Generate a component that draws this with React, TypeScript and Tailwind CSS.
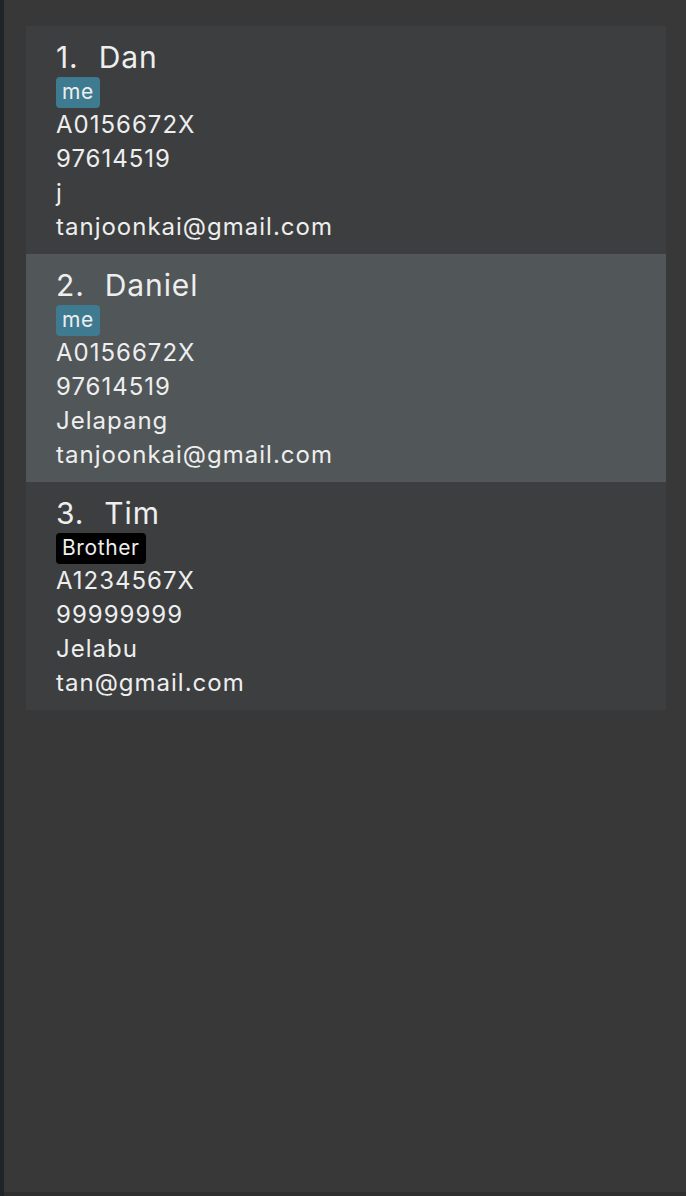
import React from "react";

type Person = { name: string; tag: string; tagDark?: boolean; id: string; phone: string; addr: string; email: string; selected?: boolean };

const people: Person[] = [
  { name: "Dan", tag: "me", id: "A0156672X", phone: "97614519", addr: "j", email: "tanjoonkai@gmail.com" },
  { name: "Daniel", tag: "me", id: "A0156672X", phone: "97614519", addr: "Jelapang", email: "tanjoonkai@gmail.com", selected: true },
  { name: "Tim", tag: "Brother", tagDark: true, id: "A1234567X", phone: "99999999", addr: "Jelabu", email: "tan@gmail.com" },
];

export default function App() {
  return (
    <div
      className="w-[686px] h-[1196px] flex bg-[#383838] text-[#eeeeee] overflow-hidden"
      style={{ fontFamily: "Inter, 'Liberation Sans', sans-serif" }}
    >
      <div className="w-[4px] h-full bg-[#1e252a]" />
      <div className="flex-1 flex flex-col">
        <div className="flex-1 pt-[26px] pl-[22px] pr-[20px]">
          {people.map((p, i) => (
            <div
              key={i}
              className={`${p.selected ? "bg-[#515658]" : "bg-[#3c3e3f]"} h-[228px] pl-[30px] pt-[12px] flex flex-col`}
            >
              <div className="h-[38px] flex items-center text-[30px] leading-[38px] tracking-[0.9px]">
                <span>{i + 1}.</span>
                <span className="ml-[20px]">{p.name}</span>
              </div>
              <div className="h-[32px] flex items-center">
                <span
                  className={`${p.tagDark ? "bg-black" : "bg-[#3e7b91]"} rounded-[4px] h-[31px] px-[6px] flex items-center text-[21px] tracking-[0.6px]`}
                >
                  {p.tag}
                </span>
              </div>
              {[p.id, p.phone, p.addr, p.email].map((t, j) => (
                <div key={j} className="h-[34px] leading-[34px] text-[24px] tracking-[1px]">
                  {t}
                </div>
              ))}
            </div>
          ))}
        </div>
        <div className="h-[4px] bg-[#2f2f2f]" />
      </div>
    </div>
  );
}
